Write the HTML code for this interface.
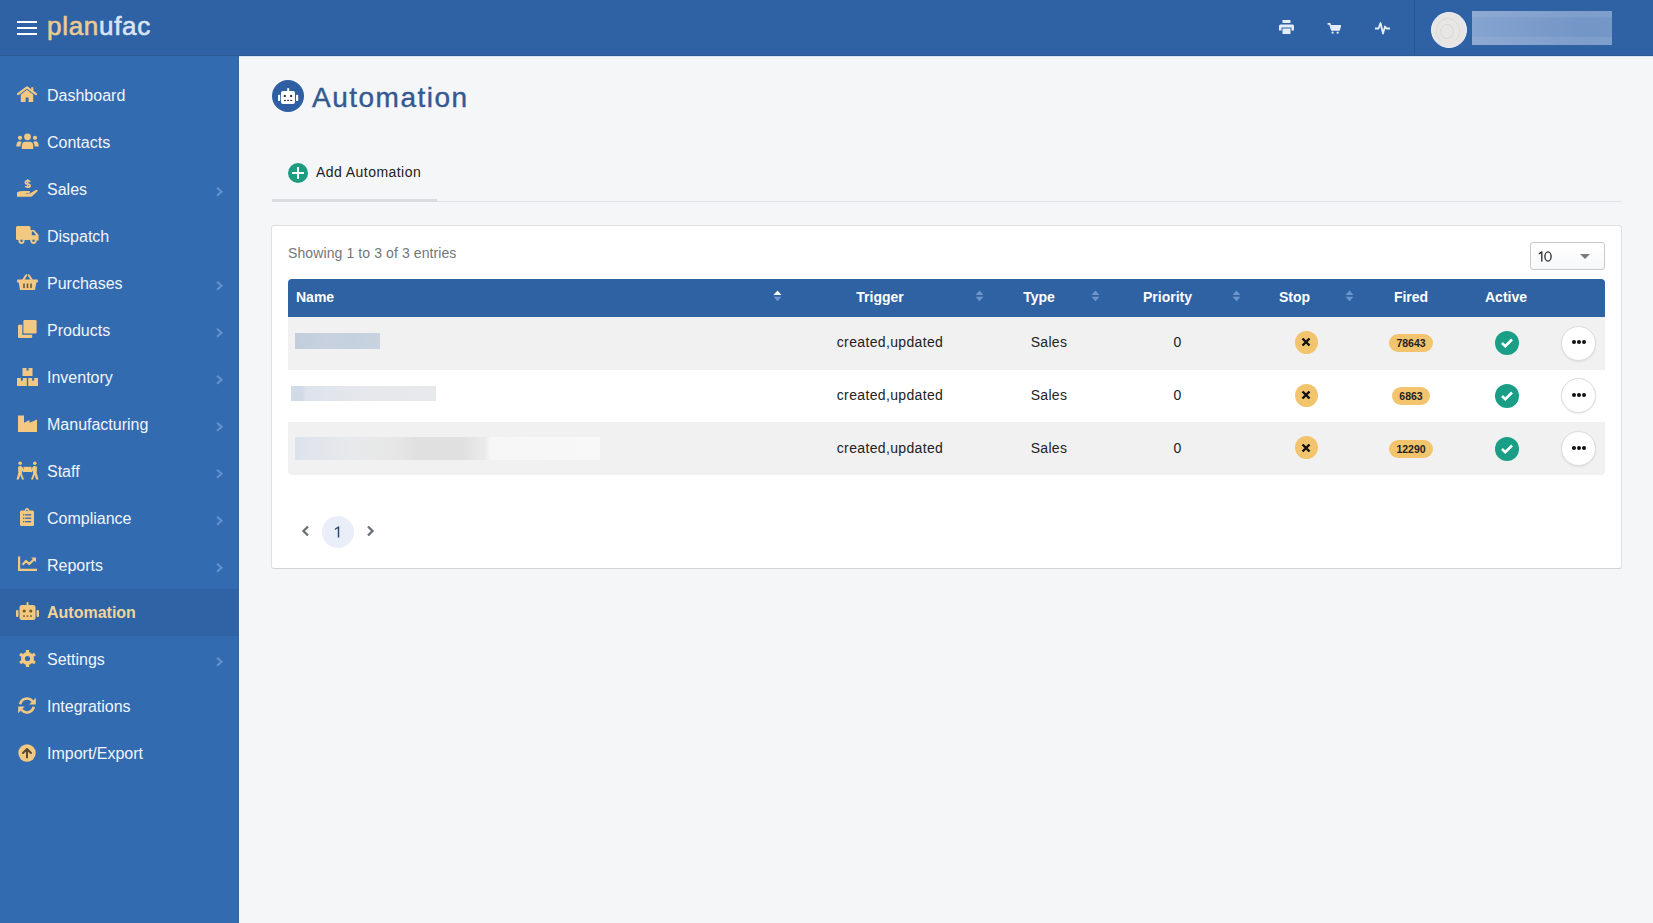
<!DOCTYPE html>
<html><head><meta charset="utf-8">
<style>
*{margin:0;padding:0;box-sizing:border-box}
html,body{width:1653px;height:923px;overflow:hidden;background:#F5F6F8;font-family:"Liberation Sans",sans-serif;position:relative}
.abs{position:absolute}
#hdr{left:0;top:0;width:1653px;height:56px;background:#2E62A4}
#side{left:0;top:56px;width:239px;height:867px;background:#336BB1;border-right:1px solid #3A6598}
.stx{left:47px;height:47px;line-height:47px;font-size:16px;color:#F1F5FB;white-space:nowrap}
.stx.act{color:#F2D39A;font-weight:bold}
.th{top:278px;height:38px;line-height:38px;font-size:14px;font-weight:bold;color:#fff;white-space:nowrap}
.td{font-size:14px;color:#222;white-space:nowrap;text-align:center}
.sort{width:9px;height:12px}
.xcirc{width:23px;height:23px;border-radius:50%;background:#F2C46E}
.badge{height:18px;border-radius:9px;background:#F2C46E;font-size:10.5px;font-weight:bold;color:#222;line-height:18px;text-align:center}
.chk{width:24px;height:24px;border-radius:50%;background:#1A9E86}
.dots{width:35px;height:35px;border-radius:50%;background:#fff;border:1px solid #DCDCDC;box-shadow:0 1px 2px rgba(0,0,0,0.08)}
</style></head><body>
<div id="hdr" class="abs">
  <div class="abs" style="left:17px;top:21px;width:20px;height:2px;background:#fff"></div>
  <div class="abs" style="left:17px;top:27px;width:20px;height:2px;background:#fff"></div>
  <div class="abs" style="left:17px;top:33px;width:20px;height:2px;background:#fff"></div>
  <div class="abs" style="left:47px;top:10px;font-size:26px;line-height:32px;white-space:nowrap;letter-spacing:0.7px;-webkit-text-stroke:0.6px currentColor"><span style="color:#ECCA93;-webkit-text-stroke:0.6px #ECCA93">plan</span><span style="color:#D9E5F6;-webkit-text-stroke:0.6px #D9E5F6">ufac</span></div>
  <!-- printer -->
  <svg class="abs" style="left:1279px;top:20px" width="15" height="14" viewBox="0 0 15 14"><rect x="3.5" y="0" width="8" height="3" fill="#E6EDFA"/><path d="M0,6 Q0,4.5 1.5,4.5 H13.5 Q15,4.5 15,6 V10.5 H12.5 V7.5 H2.5 V10.5 H0 Z" fill="#E6EDFA"/><rect x="3.5" y="8.5" width="8" height="5.5" fill="#E6EDFA"/></svg>
  <!-- cart -->
  <svg class="abs" style="left:1327px;top:22.6px" width="14" height="11" viewBox="0 0 15 12"><path d="M0.5,1 H3 L5,7.5 H13 L14.5,3 H4" fill="none" stroke="#E6EDFA" stroke-width="1.8" stroke-linejoin="round"/><rect x="4.5" y="3" width="9.5" height="4.5" fill="#E6EDFA"/><circle cx="6" cy="10.5" r="1.2" fill="#E6EDFA"/><circle cx="11.5" cy="10.5" r="1.2" fill="#E6EDFA"/></svg>
  <!-- pulse -->
  <svg class="abs" style="left:1375px;top:21px" width="15" height="14" viewBox="0 0 15 14"><polyline points="0,7.5 3.5,7.5 5.5,2 8,12.5 10,5.5 11.5,7.5 15,7.5" fill="none" stroke="#E6EDFA" stroke-width="1.8" stroke-linejoin="round"/></svg>
  <div class="abs" style="left:1414px;top:0;width:1px;height:56px;background:#285790"></div>
  <!-- avatar -->
  <div class="abs" style="left:1431px;top:12px;width:36px;height:36px;border-radius:50%;background:#E7E6E4;border:1.5px solid #EEF3FA"></div>
  <div class="abs" style="left:1436px;top:18px;width:24px;height:26px;border-radius:50%;border:1.5px solid #DBDAD8;border-bottom-color:transparent"></div>
  <div class="abs" style="left:1440px;top:24px;width:14px;height:15px;border-radius:50%;border:1.5px solid #DAD9D7"></div>
  <div class="abs" style="left:1472px;top:11px;width:140px;height:34px;background:linear-gradient(180deg,rgba(255,255,255,0.07) 0,rgba(255,255,255,0.07) 17%,rgba(255,255,255,0) 21%,rgba(255,255,255,0) 74%,rgba(255,255,255,0.07) 78%),linear-gradient(90deg,#86A4D0 0%,#7E9ECC 30%,#799AC9 55%,#7396C7 80%,#7497C8 100%)"></div>
</div>
<div id="side" class="abs"></div>
<div class="abs" style="left:0;top:55px;width:1653px;height:1px;background:#2C5A93"></div>
<div class="abs" style="left:239px;top:56px;width:1414px;height:1px;background:#D8E5F5"></div>
<svg class="abs" style="left:17px;top:86px" width="20" height="16" viewBox="0 0 20 16"><path d="M1,8.2 L10,1.3 L19,8.2" fill="none" stroke="#F3C981" stroke-width="2.2" stroke-linecap="round" stroke-linejoin="round"/><rect x="14.3" y="1.2" width="2" height="5" fill="#F3C981"/><path d="M3.8,8.6 L10,3.8 L16.2,8.6 V16 H11.6 V11.5 H8.6 V16 H3.8 Z" fill="#F3C981"/></svg>
<div class="abs stx" style="top:72px">Dashboard</div>
<svg class="abs" style="left:16px;top:133px" width="23" height="16" viewBox="0 0 23 16"><circle cx="11.5" cy="3.8" r="3.4" fill="#F3C981"/><circle cx="4" cy="4.8" r="2.1" fill="#F3C981"/><circle cx="19" cy="4.8" r="2.1" fill="#F3C981"/><path d="M5.8,16 V12.6 Q5.8,8.8 9.6,8.8 H13.4 Q17.2,8.8 17.2,12.6 V16 Z" fill="#F3C981"/><path d="M0.3,13.5 Q0.3,8.3 3.8,8.3 Q5,8.3 5.8,8.9 Q4.4,10.4 4.4,13.5 Z" fill="#F3C981"/><path d="M22.7,13.5 Q22.7,8.3 19.2,8.3 Q18,8.3 17.2,8.9 Q18.6,10.4 18.6,13.5 Z" fill="#F3C981"/></svg>
<div class="abs stx" style="top:119px">Contacts</div>
<svg class="abs" style="left:17px;top:179px" width="21" height="18" viewBox="0 0 21 18"><path d="M10.7,0.2 V9" stroke="#F3C981" stroke-width="1.3"/><path d="M13,2.9 Q12.6,1.7 10.7,1.7 Q8.4,1.7 8.4,3.5 Q8.4,4.9 10.7,5 Q13.1,5.1 13.1,6.7 Q13.1,8.2 10.7,8.2 Q8.8,8.2 8.3,7" fill="none" stroke="#F3C981" stroke-width="1.7"/><path d="M0,13.2 Q3,11.9 6.5,11.9 H11.8 Q13.1,11.9 13.1,12.9 Q13.1,14 11.8,14 H8.6 V14.6 H12.8 L18.8,10.9 Q20,10.3 20.6,11.2 Q21,11.8 20.3,12.5 L15,17.2 Q14.3,17.8 13.3,17.8 H0 Z" fill="#F3C981"/></svg>
<div class="abs stx" style="top:166px">Sales</div>
<svg class="abs" style="left:215px;top:185.7px" width="9" height="12" viewBox="0 0 9 12"><polyline points="2,1.8 6.5,5.8 2,9.8" fill="none" stroke="#6391CE" stroke-width="2.2"/></svg>
<svg class="abs" style="left:16px;top:226px" width="23" height="18" viewBox="0 0 23 18"><rect x="0" y="0" width="14.5" height="14" rx="1.5" fill="#F3C981"/><path d="M14,4 H18.2 L22.6,9 V14.5 H14 Z M15.8,5.6 V9.2 H20 L17.3,5.6 Z" fill="#F3C981" fill-rule="evenodd"/><circle cx="5.5" cy="14.8" r="3.1" fill="#F3C981"/><circle cx="17.5" cy="14.8" r="3.1" fill="#F3C981"/><circle cx="5.5" cy="14.8" r="1.2" fill="#336BB1"/><circle cx="17.5" cy="14.8" r="1.2" fill="#336BB1"/></svg>
<div class="abs stx" style="top:213px">Dispatch</div>
<svg class="abs" style="left:17px;top:274px" width="21" height="16" viewBox="0 0 21 16"><path d="M6.2,6 L9.2,1.2 M14.8,6 L11.8,1.2" stroke="#F3C981" stroke-width="2" stroke-linecap="round"/><rect x="0" y="5.6" width="21" height="3" rx="1" fill="#F3C981"/><path d="M1.6,8 H19.4 L18,16 H3 Z" fill="#F3C981"/><rect x="6.2" y="9.5" width="1.6" height="4.6" fill="#6B5A3A"/><rect x="9.7" y="9.5" width="1.6" height="4.6" fill="#6B5A3A"/><rect x="13.2" y="9.5" width="1.6" height="4.6" fill="#6B5A3A"/></svg>
<div class="abs stx" style="top:260px">Purchases</div>
<svg class="abs" style="left:215px;top:279.7px" width="9" height="12" viewBox="0 0 9 12"><polyline points="2,1.8 6.5,5.8 2,9.8" fill="none" stroke="#6391CE" stroke-width="2.2"/></svg>
<svg class="abs" style="left:18px;top:320px" width="19" height="18" viewBox="0 0 19 18"><rect x="5.4" y="0" width="13.2" height="13.6" rx="1.3" fill="#F3C981"/><path d="M0,5.9 Q0,4.8 1.1,4.8 H4.3 V14.7 H14.2 V16.9 Q14.2,18 13.1,18 H1.1 Q0,18 0,16.9 Z" fill="#F3C981"/></svg>
<div class="abs stx" style="top:307px">Products</div>
<svg class="abs" style="left:215px;top:326.7px" width="9" height="12" viewBox="0 0 9 12"><polyline points="2,1.8 6.5,5.8 2,9.8" fill="none" stroke="#6391CE" stroke-width="2.2"/></svg>
<svg class="abs" style="left:17px;top:368px" width="21" height="18" viewBox="0 0 21 18"><rect x="5.5" y="0" width="10" height="8" fill="#F3C981"/><rect x="0" y="10" width="9.8" height="8" fill="#F3C981"/><rect x="11.2" y="10" width="9.8" height="8" fill="#F3C981"/><rect x="9.5" y="0" width="2" height="2.6" fill="#336BB1"/><rect x="3.9" y="10" width="2" height="2.6" fill="#336BB1"/><rect x="15.1" y="10" width="2" height="2.6" fill="#336BB1"/></svg>
<div class="abs stx" style="top:354px">Inventory</div>
<svg class="abs" style="left:215px;top:373.7px" width="9" height="12" viewBox="0 0 9 12"><polyline points="2,1.8 6.5,5.8 2,9.8" fill="none" stroke="#6391CE" stroke-width="2.2"/></svg>
<svg class="abs" style="left:18px;top:415px" width="19" height="17" viewBox="0 0 19 17"><path d="M0,0.5 H6 V7.8 L11.5,5 V7.8 L19,4.5 V17 H0 Z" fill="#F3C981"/></svg>
<div class="abs stx" style="top:401px">Manufacturing</div>
<svg class="abs" style="left:215px;top:420.7px" width="9" height="12" viewBox="0 0 9 12"><polyline points="2,1.8 6.5,5.8 2,9.8" fill="none" stroke="#6391CE" stroke-width="2.2"/></svg>
<svg class="abs" style="left:16px;top:461px" width="23" height="19" viewBox="0 0 23 19"><circle cx="4.2" cy="2.3" r="1.8" fill="#F3C981"/><circle cx="18.8" cy="2.3" r="1.8" fill="#F3C981"/><rect x="7.5" y="5.8" width="8" height="5.2" fill="#F3C981"/><path d="M2,6 Q3,5 4.5,5 Q6,5 7,7 L8.5,10.5 L7.5,11.5 L6.3,9.5 L5.8,12.5 L8,18.5 H6 L4.3,14 L2.8,18.5 H0.5 L2.3,12 Z" fill="#F3C981"/><path d="M21,6 Q20,5 18.5,5 Q17,5 16,7 L14.5,10.5 L15.5,11.5 L16.7,9.5 L17.2,12.5 L15,18.5 H17 L18.7,14 L20.2,18.5 H22.5 L20.7,12 Z" fill="#F3C981"/></svg>
<div class="abs stx" style="top:448px">Staff</div>
<svg class="abs" style="left:215px;top:467.7px" width="9" height="12" viewBox="0 0 9 12"><polyline points="2,1.8 6.5,5.8 2,9.8" fill="none" stroke="#6391CE" stroke-width="2.2"/></svg>
<svg class="abs" style="left:20px;top:508px" width="14" height="18" viewBox="0 0 14 18"><rect x="0" y="2.5" width="14" height="15.5" rx="1.5" fill="#F3C981"/><circle cx="7" cy="2.3" r="2.2" fill="#F3C981"/><circle cx="7" cy="2.5" r="0.8" fill="#336BB1"/><rect x="3" y="6.2" width="1.3" height="1.3" fill="#336BB1"/><rect x="5.2" y="6.2" width="6" height="1.3" fill="#336BB1"/><rect x="3" y="9.6" width="1.3" height="1.3" fill="#336BB1"/><rect x="5.2" y="9.6" width="6" height="1.3" fill="#336BB1"/><rect x="3" y="13" width="1.3" height="1.3" fill="#336BB1"/><rect x="5.2" y="13" width="6" height="1.3" fill="#336BB1"/></svg>
<div class="abs stx" style="top:495px">Compliance</div>
<svg class="abs" style="left:215px;top:514.7px" width="9" height="12" viewBox="0 0 9 12"><polyline points="2,1.8 6.5,5.8 2,9.8" fill="none" stroke="#6391CE" stroke-width="2.2"/></svg>
<svg class="abs" style="left:18px;top:556px" width="19" height="15" viewBox="0 0 19 15"><path d="M0,0.5 H2.2 V12.8 H19 V15 H0 Z" fill="#F3C981"/><polyline points="4.5,8.8 8,5 11.2,8 16.5,3" fill="none" stroke="#F3C981" stroke-width="2.3" stroke-linejoin="round"/><path d="M13.2,1.5 H18 V6.3 Z" fill="#F3C981"/></svg>
<div class="abs stx" style="top:542px">Reports</div>
<svg class="abs" style="left:215px;top:561.7px" width="9" height="12" viewBox="0 0 9 12"><polyline points="2,1.8 6.5,5.8 2,9.8" fill="none" stroke="#6391CE" stroke-width="2.2"/></svg>
<div class="abs" style="left:0;top:589px;width:238px;height:47px;background:#2E63A6"></div>
<svg class="abs" style="left:16px;top:602px" width="23" height="18" viewBox="0 0 23 18"><rect x="10.5" y="0" width="2" height="3.5" rx="1" fill="#F3C981"/><rect x="3.5" y="3" width="16" height="15" rx="2.5" fill="#F3C981"/><rect x="0" y="8" width="2.5" height="7" rx="1" fill="#F3C981"/><rect x="20.5" y="8" width="2.5" height="7" rx="1" fill="#F3C981"/><circle cx="8.2" cy="9" r="1.6" fill="#7A5A20"/><circle cx="14.8" cy="9" r="1.6" fill="#7A5A20"/><rect x="7" y="13.4" width="2" height="1.3" fill="#7A5A20"/><rect x="10.5" y="13.4" width="2" height="1.3" fill="#7A5A20"/><rect x="14" y="13.4" width="2" height="1.3" fill="#7A5A20"/></svg>
<div class="abs stx act" style="top:589px">Automation</div>
<svg class="abs" style="left:19px;top:650px" width="17" height="17" viewBox="0 0 17 17"><circle cx="8.5" cy="8.5" r="6.4" fill="#F3C981"/><rect x="6.9" y="-0.2" width="3.2" height="4" rx="0.6" fill="#F3C981" transform="rotate(0 8.5 8.5)"/><rect x="6.9" y="-0.2" width="3.2" height="4" rx="0.6" fill="#F3C981" transform="rotate(60 8.5 8.5)"/><rect x="6.9" y="-0.2" width="3.2" height="4" rx="0.6" fill="#F3C981" transform="rotate(120 8.5 8.5)"/><rect x="6.9" y="-0.2" width="3.2" height="4" rx="0.6" fill="#F3C981" transform="rotate(180 8.5 8.5)"/><rect x="6.9" y="-0.2" width="3.2" height="4" rx="0.6" fill="#F3C981" transform="rotate(240 8.5 8.5)"/><rect x="6.9" y="-0.2" width="3.2" height="4" rx="0.6" fill="#F3C981" transform="rotate(300 8.5 8.5)"/><circle cx="8.5" cy="8.5" r="2.6" fill="#336BB1"/></svg>
<div class="abs stx" style="top:636px">Settings</div>
<svg class="abs" style="left:215px;top:655.7px" width="9" height="12" viewBox="0 0 9 12"><polyline points="2,1.8 6.5,5.8 2,9.8" fill="none" stroke="#6391CE" stroke-width="2.2"/></svg>
<svg class="abs" style="left:18px;top:697px" width="18" height="17" viewBox="0 0 18 17"><path d="M2.2,7.2 A7,7 0 0 1 14.5,4.2" fill="none" stroke="#F3C981" stroke-width="2.6"/><path d="M17.8,0.8 V7.5 H11.2 Z" fill="#F3C981"/><path d="M15.8,9.8 A7,7 0 0 1 3.5,12.8" fill="none" stroke="#F3C981" stroke-width="2.6"/><path d="M0.2,16.2 V9.5 H6.8 Z" fill="#F3C981"/></svg>
<div class="abs stx" style="top:683px">Integrations</div>
<svg class="abs" style="left:18px;top:744px" width="18" height="18" viewBox="0 0 18 18"><circle cx="9" cy="9" r="8.7" fill="#F3C981"/><path d="M5,9 L9,5 L13,9 M9,5.3 V13.5" fill="none" stroke="#5A4A30" stroke-width="2" stroke-linecap="round" stroke-linejoin="round"/></svg>
<div class="abs stx" style="top:730px">Import/Export</div>

<!-- page title -->
<div class="abs" style="left:272px;top:80px;width:32px;height:32px;border-radius:50%;background:#2D5FA2"></div>
<svg class="abs" style="left:277px;top:87px" width="22" height="18" viewBox="0 0 22 18"><rect x="10.2" y="1.2" width="2" height="3.2" fill="#fff"/><rect x="4" y="3.9" width="14" height="13.1" rx="2" fill="#fff"/><rect x="1" y="7.8" width="2.2" height="6.2" rx="0.8" fill="#fff"/><rect x="19" y="7.8" width="2.2" height="6.2" rx="0.8" fill="#fff"/><rect x="6.8" y="8" width="2" height="2" fill="#2E2E2E"/><rect x="13.1" y="8" width="2" height="2" fill="#2E2E2E"/><rect x="7" y="12.9" width="2" height="1.1" fill="#3A3A3A"/><rect x="10.1" y="12.9" width="2" height="1.1" fill="#3A3A3A"/><rect x="13.2" y="12.9" width="2" height="1.1" fill="#3A3A3A"/></svg>
<div class="abs" style="left:312px;top:81px;font-size:28px;line-height:34px;color:#33598F;letter-spacing:1.5px;-webkit-text-stroke:0.4px #33598F;white-space:nowrap">Automation</div>

<!-- tab -->
<div class="abs" style="left:288px;top:163px;width:20px;height:20px;border-radius:50%;background:#1E9C82"></div>
<div class="abs" style="left:297px;top:167px;width:2px;height:12px;background:#fff"></div>
<div class="abs" style="left:292px;top:172px;width:12px;height:2px;background:#fff"></div>
<div class="abs" style="left:316px;top:163px;font-size:14px;line-height:18px;color:#222;letter-spacing:0.45px;white-space:nowrap">Add Automation</div>
<div class="abs" style="left:272px;top:201px;width:1349px;height:1px;background:#E1E3E6"></div>
<div class="abs" style="left:272px;top:199px;width:165px;height:3px;background:#DADCDF"></div>

<!-- card -->
<div class="abs" style="left:271px;top:225px;width:1351px;height:344px;background:#fff;border:1px solid #DFE0E2;border-bottom-color:#D2D3D5;border-radius:3px"></div>
<div class="abs" style="left:288px;top:244px;font-size:14px;line-height:18px;color:#737679;letter-spacing:0.1px;white-space:nowrap">Showing 1 to 3 of 3 entries</div>
<!-- select -->
<div class="abs" style="left:1530px;top:242px;width:75px;height:28px;border:1px solid #C9CACC;border-radius:3px;background:linear-gradient(#fff,#F7F8FA)"></div>
<svg class="abs" style="left:1538px;top:251px" width="15" height="11" viewBox="0 0 15 11"><path d="M1.3,2.6 L3.8,0.9 V10.2" fill="none" stroke="#2A2A2A" stroke-width="1.3" stroke-linecap="round" stroke-linejoin="round"/><ellipse cx="10" cy="5.5" rx="3.1" ry="4.6" fill="none" stroke="#2A2A2A" stroke-width="1.3"/></svg>
<svg class="abs" style="left:1580px;top:254px" width="10" height="5" viewBox="0 0 10 5"><path d="M0,0 H10 L5,5 Z" fill="#7A7A7A"/></svg>

<!-- table header -->
<div class="abs" style="left:288px;top:279px;width:1317px;height:38px;background:#2F62A3;border-radius:4px 4px 0 0"></div>
<div class="abs th" style="left:296px">Name</div>
<div class="abs th" style="left:789px;width:202px;padding:0 28px 0 8px;text-align:center">Trigger</div>
<div class="abs th" style="left:991px;width:116px;padding:0 28px 0 8px;text-align:center">Type</div>
<div class="abs th" style="left:1107px;width:141px;padding:0 28px 0 8px;text-align:center">Priority</div>
<div class="abs th" style="left:1248px;width:113px;padding:0 28px 0 8px;text-align:center">Stop</div>
<div class="abs th" style="left:1361px;width:100px;text-align:center">Fired</div>
<div class="abs th" style="left:1461px;width:90px;text-align:center">Active</div>
<!-- sort icons -->
<svg class="abs sort" style="left:773px;top:290px" viewBox="0 0 9 12"><path d="M0.5,5 L4.5,0.5 L8.5,5 Z" fill="#fff"/><path d="M0.5,6.8 L4.5,11.3 L8.5,6.8 Z" fill="#6D95CB"/></svg>
<svg class="abs sort" style="left:975px;top:290px" viewBox="0 0 9 12"><path d="M0.5,5 L4.5,0.5 L8.5,5 Z" fill="#6D95CB"/><path d="M0.5,6.8 L4.5,11.3 L8.5,6.8 Z" fill="#6D95CB"/></svg>
<svg class="abs sort" style="left:1091px;top:290px" viewBox="0 0 9 12"><path d="M0.5,5 L4.5,0.5 L8.5,5 Z" fill="#6D95CB"/><path d="M0.5,6.8 L4.5,11.3 L8.5,6.8 Z" fill="#6D95CB"/></svg>
<svg class="abs sort" style="left:1232px;top:290px" viewBox="0 0 9 12"><path d="M0.5,5 L4.5,0.5 L8.5,5 Z" fill="#6D95CB"/><path d="M0.5,6.8 L4.5,11.3 L8.5,6.8 Z" fill="#6D95CB"/></svg>
<svg class="abs sort" style="left:1345px;top:290px" viewBox="0 0 9 12"><path d="M0.5,5 L4.5,0.5 L8.5,5 Z" fill="#6D95CB"/><path d="M0.5,6.8 L4.5,11.3 L8.5,6.8 Z" fill="#6D95CB"/></svg>

<!-- rows -->
<div class="abs" style="left:288px;top:317px;width:1317px;height:52.5px;background:#F1F1F1"></div>
<div class="abs" style="left:288px;top:422px;width:1317px;height:52.5px;background:#F1F1F1;border-radius:0 0 4px 4px"></div>
<div class="abs" style="left:295px;top:333px;width:85px;height:16px;background:linear-gradient(90deg,#C3CEDD,#C7D1DF 40%,#C5D0DE 70%,#C9D3E0)"></div>
<div class="abs td" style="left:789px;width:202px;top:333.0px;line-height:18px;letter-spacing:0.35px">created,updated</div>
<div class="abs td" style="left:991px;width:116px;top:333.0px;line-height:18px;letter-spacing:0.3px">Sales</div>
<div class="abs td" style="left:1107px;width:141px;top:333.0px;line-height:18px">0</div>
<div class="abs xcirc" style="left:1294.5px;top:330.8px"></div>
<svg class="abs" style="left:1301px;top:337.0px" width="10" height="10" viewBox="0 0 10 10"><path d="M1.5,1.5 L8.5,8.5 M8.5,1.5 L1.5,8.5" stroke="#111" stroke-width="2.4"/></svg>
<div class="abs badge" style="left:1389.0px;top:334.0px;width:44px">78643</div>
<div class="abs chk" style="left:1495px;top:331.0px"></div>
<svg class="abs" style="left:1500px;top:337.0px" width="14" height="12" viewBox="0 0 14 12"><polyline points="2,6 5.3,9.2 12,2.5" fill="none" stroke="#fff" stroke-width="2.6"/></svg>
<div class="abs dots" style="left:1561px;top:325.5px"></div>
<div class="abs" style="left:1572px;top:340.0px;width:4px;height:4px;border-radius:50%;background:#111"></div>
<div class="abs" style="left:1577px;top:340.0px;width:4px;height:4px;border-radius:50%;background:#111"></div>
<div class="abs" style="left:1582px;top:340.0px;width:4px;height:4px;border-radius:50%;background:#111"></div>
<div class="abs" style="left:291px;top:386px;width:145px;height:15px;background:linear-gradient(90deg,#D2DAE7 0,#D2DAE7 8%,#DDE3EC 10%,#E2E6EC 30%,#E6E8EB 60%,#E7E9EC 100%)"></div>
<div class="abs td" style="left:789px;width:202px;top:385.8px;line-height:18px;letter-spacing:0.35px">created,updated</div>
<div class="abs td" style="left:991px;width:116px;top:385.8px;line-height:18px;letter-spacing:0.3px">Sales</div>
<div class="abs td" style="left:1107px;width:141px;top:385.8px;line-height:18px">0</div>
<div class="abs xcirc" style="left:1294.5px;top:383.6px"></div>
<svg class="abs" style="left:1301px;top:389.8px" width="10" height="10" viewBox="0 0 10 10"><path d="M1.5,1.5 L8.5,8.5 M8.5,1.5 L1.5,8.5" stroke="#111" stroke-width="2.4"/></svg>
<div class="abs badge" style="left:1392.0px;top:386.8px;width:38px">6863</div>
<div class="abs chk" style="left:1495px;top:383.8px"></div>
<svg class="abs" style="left:1500px;top:389.8px" width="14" height="12" viewBox="0 0 14 12"><polyline points="2,6 5.3,9.2 12,2.5" fill="none" stroke="#fff" stroke-width="2.6"/></svg>
<div class="abs dots" style="left:1561px;top:378.3px"></div>
<div class="abs" style="left:1572px;top:392.8px;width:4px;height:4px;border-radius:50%;background:#111"></div>
<div class="abs" style="left:1577px;top:392.8px;width:4px;height:4px;border-radius:50%;background:#111"></div>
<div class="abs" style="left:1582px;top:392.8px;width:4px;height:4px;border-radius:50%;background:#111"></div>
<div class="abs" style="left:295px;top:437px;width:305px;height:23px;background:linear-gradient(90deg,#DCE2EC 0,#E0E4EC 5%,#E8E9EB 20%,#E6E6E6 33%,#E0E0E0 40%,#E0E0E0 55%,#E8E8E8 60%,#EAEAEA 62%,#F6F6F6 64%,#F8F8F8 100%)"></div>
<div class="abs td" style="left:789px;width:202px;top:438.6px;line-height:18px;letter-spacing:0.35px">created,updated</div>
<div class="abs td" style="left:991px;width:116px;top:438.6px;line-height:18px;letter-spacing:0.3px">Sales</div>
<div class="abs td" style="left:1107px;width:141px;top:438.6px;line-height:18px">0</div>
<div class="abs xcirc" style="left:1294.5px;top:436.40000000000003px"></div>
<svg class="abs" style="left:1301px;top:442.6px" width="10" height="10" viewBox="0 0 10 10"><path d="M1.5,1.5 L8.5,8.5 M8.5,1.5 L1.5,8.5" stroke="#111" stroke-width="2.4"/></svg>
<div class="abs badge" style="left:1389.0px;top:439.6px;width:44px">12290</div>
<div class="abs chk" style="left:1495px;top:436.6px"></div>
<svg class="abs" style="left:1500px;top:442.6px" width="14" height="12" viewBox="0 0 14 12"><polyline points="2,6 5.3,9.2 12,2.5" fill="none" stroke="#fff" stroke-width="2.6"/></svg>
<div class="abs dots" style="left:1561px;top:431.1px"></div>
<div class="abs" style="left:1572px;top:445.6px;width:4px;height:4px;border-radius:50%;background:#111"></div>
<div class="abs" style="left:1577px;top:445.6px;width:4px;height:4px;border-radius:50%;background:#111"></div>
<div class="abs" style="left:1582px;top:445.6px;width:4px;height:4px;border-radius:50%;background:#111"></div>

<!-- pagination -->
<svg class="abs" style="left:301px;top:525px" width="9" height="12" viewBox="0 0 9 12"><polyline points="7,1.5 2.5,6 7,10.5" fill="none" stroke="#6B6E73" stroke-width="2.3"/></svg>
<div class="abs" style="left:322px;top:516px;width:32px;height:32px;border-radius:50%;background:#EAEEF8"></div>
<svg class="abs" style="left:334px;top:526px" width="7" height="12" viewBox="0 0 7 12"><path d="M1.5,3 L4.5,1 V11" fill="none" stroke="#2E4A70" stroke-width="1.5" stroke-linecap="round" stroke-linejoin="round"/></svg>
<svg class="abs" style="left:366px;top:525px" width="9" height="12" viewBox="0 0 9 12"><polyline points="2,1.5 6.5,6 2,10.5" fill="none" stroke="#6B6E73" stroke-width="2.3"/></svg>
</body></html>
